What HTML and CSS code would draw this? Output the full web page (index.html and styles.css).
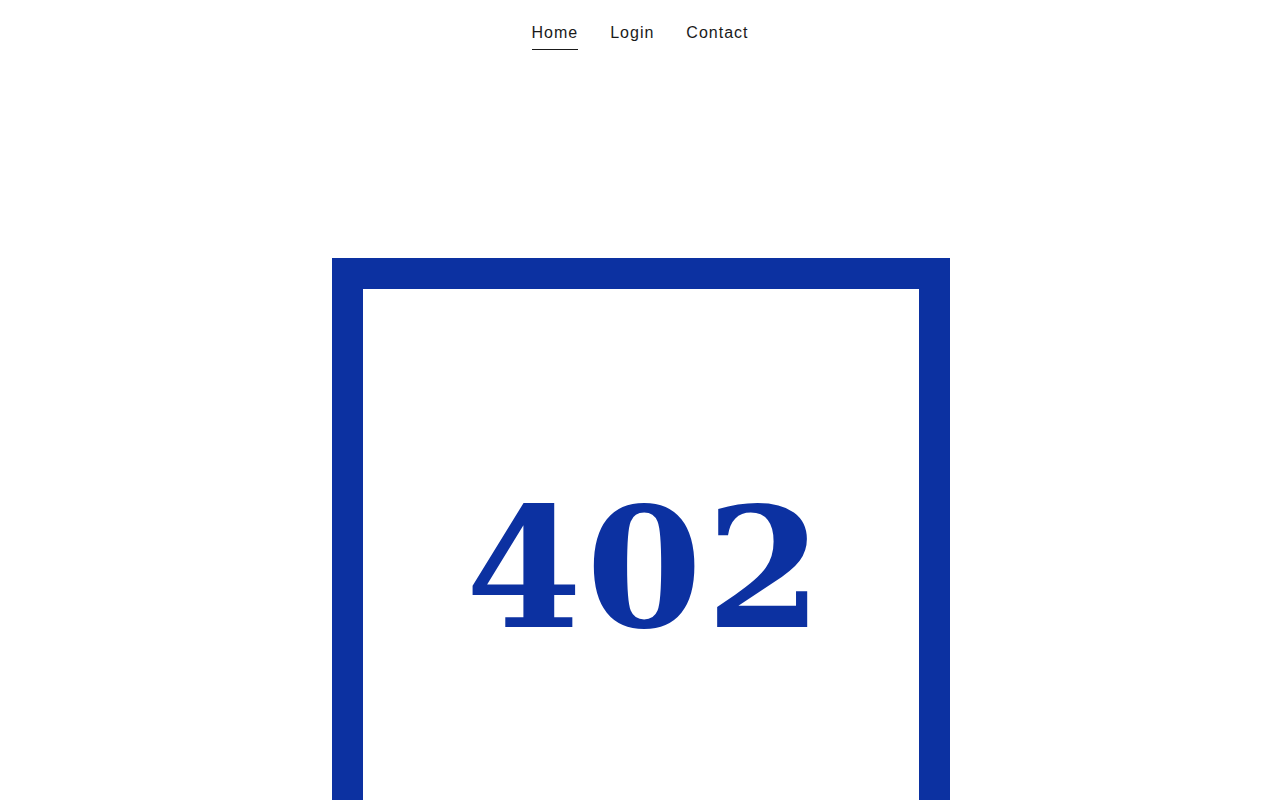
FILE: index.html
```html
<!DOCTYPE html>
<html lang="en">
<head>
<meta charset="utf-8">
<title>402</title>
<link rel="stylesheet" href="styles.css">
</head>
<body>
<header class="site-header">
  <nav class="nav">
    <a class="nav-link active" href="#">Home</a>
    <a class="nav-link" href="#">Login</a>
    <a class="nav-link" href="#">Contact</a>
  </nav>
</header>
<main class="main">
  <div class="frame">
    <span class="code">402</span>
  </div>
</main>
</body>
</html>
```
FILE: styles.css
```css
html, body {
  margin: 0;
  padding: 0;
  background: #ffffff;
}
body {
  font-family: "Liberation Sans", Arial, sans-serif;
  color: #1a1a1a;
}
.site-header {
  display: flex;
  justify-content: center;
  padding-top: 23px;
}
.nav {
  display: flex;
  gap: 32px;
}
.nav-link {
  font-size: 16px;
  letter-spacing: 1px;
  color: #1a1a1a;
  text-decoration: none;
  line-height: 20px;
  padding-bottom: 6px;
  border-bottom: 1px solid transparent;
}
.nav-link.active {
  border-bottom-color: #1a1a1a;
}
.main {
  display: flex;
  justify-content: center;
  padding-top: 208px;
  padding-left: 2px;
}
.frame {
  box-sizing: border-box;
  width: 618px;
  height: 618px;
  border: 31px solid #0c31a1;
  display: flex;
  align-items: center;
  justify-content: center;
}
.code {
  font-family: "DejaVu Serif", "Liberation Serif", serif;
  font-weight: bold;
  font-size: 167px;
  letter-spacing: 4px;
  color: #0c31a1;
  line-height: 1;
  margin-left: 10px;
  margin-top: 2px;
}
```
